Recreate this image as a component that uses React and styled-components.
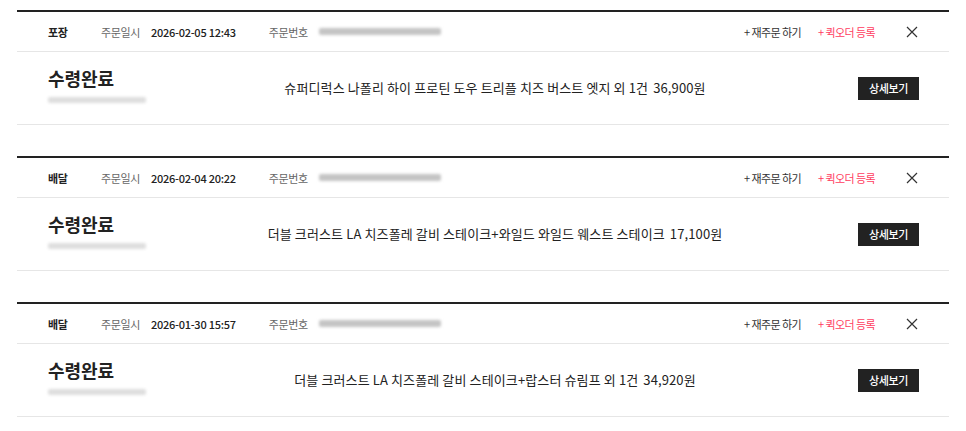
import React from 'react';
import styled, { createGlobalStyle } from 'styled-components';

const GlobalStyle = createGlobalStyle`
  body {
    margin: 0;
    background: #fff;
    font-family: 'Noto Sans CJK KR', 'Noto Sans', sans-serif;
    color: #222;
  }
`;

const List = styled.div`
  display: flex;
  flex-direction: column;
  gap: 31px;
  width: 932px;
  padding: 10px 0 0 17px;
`;

const Card = styled.div`
  border-top: 2px solid #222;
  border-bottom: 1px solid #e6e6e6;
`;

const Head = styled.div`
  height: 39px;
  display: flex;
  align-items: center;
  padding: 0 31px 0 31px;
  border-bottom: 1px solid #e6e6e6;
  font-size: 11px;
  letter-spacing: -0.4px;
`;

const Type = styled.span`
  width: 53px;
  font-weight: 700;
  color: #222;
`;

const Label = styled.span`
  color: #666;
  margin-right: 11px;
`;

const Value = styled.span`
  color: #222;
  font-weight: 500;
  margin-right: 33px;
  letter-spacing: -0.25px;
`;

const Blurred = styled.span`
  display: inline-block;
  width: ${(p) => p.w}px;
  height: ${(p) => p.h}px;
  background: ${(p) => p.c};
  border-radius: 2px;
  filter: blur(1.6px);
`;

const Actions = styled.div`
  margin-left: auto;
  display: flex;
  align-items: center;
  gap: 17px;
`;

const Link = styled.a`
  display: flex;
  align-items: center;
  color: ${(p) => (p.accent ? '#ff3d5f' : '#333')};
  text-decoration: none;
  font-size: 11px;
  letter-spacing: -0.6px;
  cursor: pointer;
`;

const Plus = styled.span`
  margin-right: 2px;
`;

const Close = styled.button`
  margin-left: 14px;
  width: 12px;
  height: 12px;
  padding: 0;
  border: none;
  background: none;
  display: flex;
  cursor: pointer;
`;

const Body = styled.div`
  height: 72px;
  display: grid;
  grid-template-columns: 84px 1fr 61px;
  align-items: center;
  padding: 0 30px 0 31px;
`;

const Status = styled.div`
  display: flex;
  flex-direction: column;
  gap: 8px;
  margin-top: -6px;
  white-space: nowrap;
`;

const StatusTitle = styled.strong`
  font-size: 18px;
  font-weight: 700;
  letter-spacing: -0.1px;
  line-height: 22px;
`;

const Product = styled.p`
  margin: 0 0 1px;
  text-align: center;
  font-size: 13px;
  letter-spacing: 0.12px;
  color: #222;
  white-space: nowrap;
`;

const Price = styled.span`
  margin-left: 5px;
`;

const DetailBtn = styled.button`
  width: 61px;
  height: 23px;
  background: #222;
  color: #fff;
  border: none;
  font-family: inherit;
  font-size: 11px;
  font-weight: 500;
  letter-spacing: -0.4px;
  cursor: pointer;
`;

const orders = [
  {
    type: '포장',
    date: '2026-02-05 12:43',
    product: '슈퍼디럭스 나폴리 하이 프로틴 도우 트리플 치즈 버스트 엣지 외 1건',
    price: '36,900원',
  },
  {
    type: '배달',
    date: '2026-02-04 20:22',
    product: '더블 크러스트 LA 치즈폴레 갈비 스테이크+와일드 와일드 웨스트 스테이크',
    price: '17,100원',
  },
  {
    type: '배달',
    date: '2026-01-30 15:57',
    product: '더블 크러스트 LA 치즈폴레 갈비 스테이크+랍스터 슈림프 외 1건',
    price: '34,920원',
  },
];

const XIcon = () => (
  <svg width="12" height="12" viewBox="0 0 12 12">
    <path d="M1 1L11 11M11 1L1 11" stroke="#333" strokeWidth="1.2" fill="none" />
  </svg>
);

export default function App() {
  return (
    <>
      <GlobalStyle />
      <List>
        {orders.map((o, i) => (
          <Card key={i}>
            <Head>
              <Type>{o.type}</Type>
              <Label>주문일시</Label>
              <Value>{o.date}</Value>
              <Label>주문번호</Label>
              <Blurred w={122} h={7} c="#c4c4c4" />
              <Actions>
                <Link>
                  <Plus>+</Plus>재주문 하기
                </Link>
                <Link accent>
                  <Plus>+</Plus>퀵오더 등록
                </Link>
                <Close aria-label="삭제">
                  <XIcon />
                </Close>
              </Actions>
            </Head>
            <Body>
              <Status>
                <StatusTitle>수령완료</StatusTitle>
                <Blurred w={98} h={6} c="#dedede" />
              </Status>
              <Product>
                {o.product}
                <Price>{o.price}</Price>
              </Product>
              <DetailBtn>상세보기</DetailBtn>
            </Body>
          </Card>
        ))}
      </List>
    </>
  );
}
